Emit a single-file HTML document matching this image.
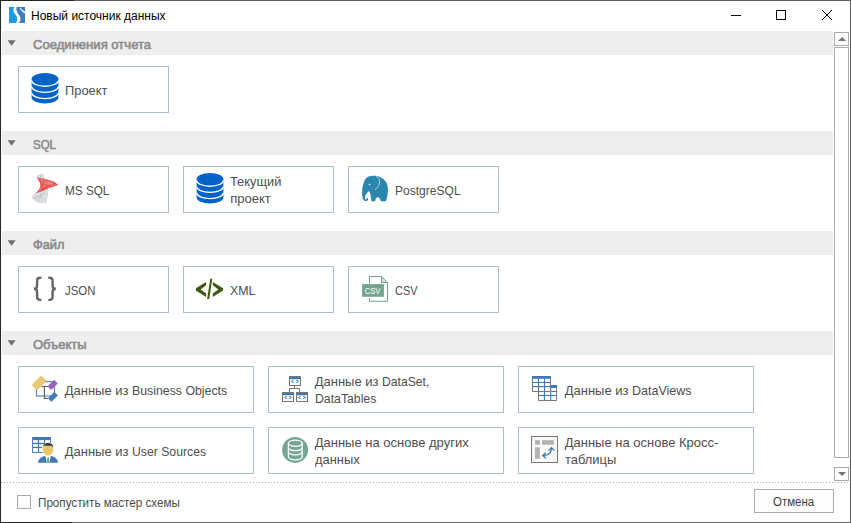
<!DOCTYPE html>
<html lang="ru">
<head>
<meta charset="utf-8">
<title>Новый источник данных</title>
<style>
html,body{margin:0;padding:0;background:#fff;}
body{width:851px;height:523px;overflow:hidden;font-family:"Liberation Sans",sans-serif;}
.win{position:relative;width:851px;height:523px;background:#fff;overflow:hidden;}
.bd{position:absolute;pointer-events:none;}
.bd.l{left:0;top:0;width:1px;height:523px;background:#262624;}
.bd.r{left:850px;top:0;width:1px;height:523px;background:#5a5a5a;}
.bd.t{left:0;top:0;width:851px;height:1px;background:linear-gradient(to right,#262624 0,#262624 74px,#5e5e5e 74px,#5e5e5e 100%);}
.bd.b{left:0;top:522px;width:851px;height:1px;background:linear-gradient(to right,#262624 0,#262624 72px,#626262 72px,#626262 100%);}
.titlebar{position:absolute;left:0;top:0;width:851px;height:31px;background:#fff;}
.logo{position:absolute;left:9px;top:7px;}
.winctl{position:absolute;left:725px;top:1px;}
.tx{position:absolute;white-space:pre;line-height:17px;transform-origin:0 0;display:block;}
.sc{display:inline-block;transform-origin:0 0;white-space:pre;}
.tx.title{font-size:12px;color:#000;}
.tx.h{font-size:12px;font-weight:400;color:#8a8a8a;-webkit-text-stroke:0.55px #8a8a8a;}
.tx.l{font-size:13px;color:#4e4e4e;}
.tx.f{font-size:12px;color:#4c4c4c;}
.tx.b{font-size:12px;color:#3c3c3c;}
.content{position:absolute;left:0;top:0;width:851px;height:482px;}
.hdr{position:absolute;left:2px;width:831px;height:24px;background:#eeeeee;}
.arr{position:absolute;left:5.6px;top:9.2px;width:8px;height:5.5px;background:#707070;clip-path:polygon(0 0,100% 0,50% 100%);}
.tile{position:absolute;height:45px;border:1px solid #aebccf;background:#fff;}
.ic{position:absolute;left:-1px;top:-1px;}
.scroll{position:absolute;left:833px;top:31px;}
.footer{position:absolute;left:0;top:483px;width:851px;height:40px;}
.footer::before{content:"";position:absolute;left:1px;top:-1px;width:848px;height:1px;background:repeating-linear-gradient(to right,#adadad 0,#adadad 1px,transparent 1px,transparent 3px);}
.cb{position:absolute;left:17px;top:12px;width:12px;height:12px;border:1px solid #a8a8a8;background:#fdfdfd;}
.btn{position:absolute;left:754px;top:6px;width:78px;height:22px;border:1px solid #adadad;background:#fdfdfd;}
</style>
</head>
<body>
<div class="win">
<div class="titlebar">
<svg class="logo" width="16" height="16" viewBox="9 7 16 16"><path fill="#1b9ce2" d="M9,7 H14.4 C13,9 12.9,11 14.5,13.2 C16.5,15.8 18.8,18.6 16,23 H9 Z"/><path fill="#3f7cbf" d="M16.7,7 H25 V23 H18.9 C21.2,19.8 21,17.8 19,15 C17,12.3 15.6,10 16.7,7 Z"/><path fill="#ffffff" d="M19.7,8 L20.3,7.8 C21.8,9.5 23.3,10.8 25,11.8 L25,13.6 C22.8,12.3 21,10.3 19.7,8 Z"/></svg>
<span class="tx title" style="left:31.0px;top:7.5px;">Новый источник данных</span>
<svg class="winctl" width="120" height="30" viewBox="725 1 120 30"><path d="M731,15.5 H741" stroke="#000" stroke-width="1" fill="none"/><rect x="776.5" y="10.5" width="9" height="9" stroke="#000" stroke-width="1" fill="none"/><path d="M822,10 L832,20 M832,10 L822,20" stroke="#000" stroke-width="1" fill="none"/></svg>
</div>
<div class="content">
<div class="hdr" style="top:31px"><i class="arr"></i><span class="tx h" style="left:31.2px;top:5.5px;transform:scaleX(1.0896);">Соединения отчета</span></div>
<div class="hdr" style="top:131px"><i class="arr"></i><span class="tx h" style="left:31.2px;top:5.5px;transform:scaleX(0.9577);">SQL</span></div>
<div class="hdr" style="top:231px"><i class="arr"></i><span class="tx h" style="left:31.2px;top:5.5px;transform:scaleX(1.0672);">Файл</span></div>
<div class="hdr" style="top:331px"><i class="arr"></i><span class="tx h" style="left:31.2px;top:5.5px;transform:scaleX(1.0828);">Объекты</span></div>
<div class="tile" style="left:18px;top:66px;width:149px"><svg class="ic" width="47" height="47" viewBox="0 0 47 47"><path fill="#0563c7" d="M13.6,13 a13.4,6 0 0 1 26.8,0 v18.5 a13.4,6 0 0 1 -26.8,0 z"/><g fill="none" stroke="#fff" stroke-width="1.35"><path d="M13.6,14.4 a13.4,5.8 0 0 0 26.8,0"/><path d="M13.6,20.6 a13.4,5.8 0 0 0 26.8,0"/><path d="M13.6,26.8 a13.4,5.8 0 0 0 26.8,0"/></g></svg><span class="tx l" style="left:46.4px;top:15.0px;transform:scaleX(0.9900);">Проект</span></div>
<div class="tile" style="left:18px;top:166px;width:149px"><svg class="ic" width="47" height="47" viewBox="0 0 47 47"><path fill="#dfe3e6" stroke="#bcc3c9" stroke-width="0.5" d="M19,10 L24.7,8 L26.2,13 L22.5,14 Z"/><path fill="#dfe3e6" stroke="#bcc3c9" stroke-width="0.5" d="M17.4,27.3 C15,29 14,30.5 14.3,31.5 C15,34 19,36 22.5,36.6 L27.9,36.6 C29,33 30,28 29.6,22.6 Z"/><path fill="none" stroke="#aeb6bd" stroke-width="0.45" d="M18,29 L28,33 M16,32 L29,28 M22,26 L24,36 M26,25 L20,35 M15,31 L22,36 M28,25 L17,33 M20.5,9.5 L25.5,12 M23,8.8 L22,13.5"/><path fill="#e2413a" fill-opacity="0.92" d="M18.2,11.2 C24,12.4 31,13.5 35.5,15.6 C38,16.8 39.5,18.2 39.9,19.3 C36,20.2 32,21.6 29.5,22.8 C25,25 21,26.5 17.2,27.5 C20,25 22,22.5 22.3,20 C22.6,16.5 20.5,13.5 18.2,11.2 Z"/><path fill="none" stroke="#ffffff" stroke-opacity="0.38" stroke-width="0.5" d="M22,14 L33,19 M24,17 L36,17 M23,22 L34,16 M27,13.5 L27,23 M31,14.5 L30,22 M20,12 L38,19 M21,25 L30,15 M34,15.5 L33,21 M24,13 L22,25 M29,14 L36,20"/></svg><span class="tx l" style="left:46.4px;top:15.0px;transform:scaleX(0.9038);">MS SQL</span></div>
<div class="tile" style="left:183px;top:166px;width:149px"><svg class="ic" width="47" height="47" viewBox="0 0 47 47"><path fill="#0563c7" d="M13.6,13 a13.4,6 0 0 1 26.8,0 v18.5 a13.4,6 0 0 1 -26.8,0 z"/><g fill="none" stroke="#fff" stroke-width="1.35"><path d="M13.6,14.4 a13.4,5.8 0 0 0 26.8,0"/><path d="M13.6,20.6 a13.4,5.8 0 0 0 26.8,0"/><path d="M13.6,26.8 a13.4,5.8 0 0 0 26.8,0"/></g></svg><span class="tx l" style="left:46.3px;top:6.0px;transform:scaleX(0.9865);">Текущий</span><span class="tx l" style="left:46.3px;top:23.0px;">проект</span></div>
<div class="tile" style="left:348px;top:166px;width:149px"><svg class="ic" width="47" height="47" viewBox="0 0 47 47"><path fill="#2b86ad" d="M23.5,9.9 C20.5,10 18.3,11.3 17,13.8 C15.3,17 14.3,21 14.1,25.3 C14,28 14.1,30.5 14.7,32.2 C15.3,34 16.4,35.1 17.8,35.1 C19.3,35.1 20.2,34 20,32.7 C19.8,31.7 19,31.4 18.4,31.8 C19,32.3 18.9,33.3 18,33.5 C17,33.6 16.7,32.4 17,31 C17.5,28.7 19,26.3 21.1,24.9 C21.8,26 22.3,27.5 22.6,29.5 L23.5,35.3 L27.1,35.3 C27.3,33.3 28.3,31.3 29.9,31.3 C31.5,31.3 32.5,33.3 32.7,35.3 L37.9,35.3 C39.2,32 40,27.5 39.9,23 C39.8,19.5 39,17 37.5,15.2 C35,12 31,10 27.1,9.7 C25.8,9.6 24.6,9.7 23.5,9.9 Z"/><path fill="none" stroke="#fff" stroke-opacity="0.85" stroke-width="0.7" d="M28,10.3 C30.5,11.5 31.8,13.5 31.6,16 C31.4,19 29.5,22 27,23.8"/><circle cx="21.5" cy="18.5" r="0.75" fill="#fff"/></svg><span class="tx l" style="left:46.4px;top:15.0px;transform:scaleX(0.9262);">PostgreSQL</span></div>
<div class="tile" style="left:18px;top:266px;width:149px"><svg class="ic" width="47" height="47" viewBox="0 0 47 47"><g fill="none" stroke="#666" stroke-width="2.4"><path d="M23.4,11.8 h-1.2 q-3.1,0 -3.1,3 v4.6 q0,3.4 -3.2,3.4 q3.2,0 3.2,3.4 v4.6 q0,3.1 3.1,3.1 h1.2"/><path d="M30.3,11.8 h1.2 q3.1,0 3.1,3 v4.6 q0,3.4 3.2,3.4 q-3.2,0 -3.2,3.4 v4.6 q0,3.1 -3.1,3.1 h-1.2"/></g></svg><span class="tx l" style="left:46.0px;top:15.0px;transform:scaleX(0.8768);">JSON</span></div>
<div class="tile" style="left:183px;top:266px;width:149px"><svg class="ic" width="47" height="47" viewBox="0 0 47 47"><g fill="#3b5b0b"><path d="M23.1,16 L12.9,22.3 L12.9,24.5 L23.1,30.9 L23.1,27.6 L17.6,23.4 L23.1,19.3 Z"/><path d="M27.3,12.8 L29.3,12.8 L26.2,32.9 L24.1,32.9 Z"/><path d="M29.8,16 L40,22.3 L40,24.5 L29.8,30.9 L29.8,27.6 L35.3,23.4 L29.8,19.3 Z"/></g></svg><span class="tx l" style="left:46.0px;top:15.0px;transform:scaleX(0.9501);">XML</span></div>
<div class="tile" style="left:348px;top:266px;width:149px"><svg class="ic" width="47" height="47" viewBox="0 0 47 47"><path fill="none" stroke="#74a48f" stroke-width="1" d="M21.5,17.5 V10.5 H33.5 L39.5,16.5 V35.3 H21.5 V32"/><path fill="#d5e5de" stroke="#74a48f" stroke-width="1" d="M33.5,10.5 V16.5 H39.5 Z"/><rect x="14.1" y="18.1" width="21.8" height="12.7" fill="#74a48f"/><text x="16.8" y="28.1" font-family="Liberation Sans, sans-serif" font-size="9.8" fill="#fff" textLength="15.6" lengthAdjust="spacingAndGlyphs">CSV</text></svg><span class="tx l" style="left:46.4px;top:15.0px;transform:scaleX(0.8416);">CSV</span></div>
<div class="tile" style="left:18px;top:366px;width:234px"><svg class="ic" width="47" height="47" viewBox="0 0 47 47"><rect x="18.5" y="15.7" width="18" height="14.3" fill="none" stroke="#4a86c5" stroke-width="1.15"/><path fill="none" stroke="#555" stroke-width="1.1" d="M23.5,20.5 H29.9 M26.4,20.5 V32.5 H29.9"/><rect x="-6.8" y="-3.8" width="13.6" height="7.6" rx="1.3" fill="#ebc778" transform="translate(21.05,16.9) rotate(-45)"/><rect x="-4.6" y="-2.6" width="9.2" height="5.2" rx="0.8" fill="#9a5fc0" transform="translate(34.7,18.9) rotate(-45)"/><rect x="-4.6" y="-2.5" width="9.2" height="5" rx="0.8" fill="#3f7cbf" transform="translate(34.9,30.9) rotate(-45)"/></svg><span class="tx l" style="left:45.7px;top:15.0px;">Данные из <span class="sc" style="transform:scaleX(0.9476);">Business Objects</span></span></div>
<div class="tile" style="left:268px;top:366px;width:234px"><svg class="ic" width="47" height="47" viewBox="0 0 47 47"><path fill="none" stroke="#777" stroke-width="1" d="M26.5,19.5 V22.5 M21.5,26.5 V22.5 H31.5 V26.5"/><rect x="21.5" y="10.5" width="11" height="9" fill="#fff" stroke="#777"/><rect x="22" y="11" width="10" height="2.2" fill="#3d78b8"/><path fill="none" stroke="#3d78b8" stroke-width="1" d="M25.8,14 l-2.4,1.4 l2.4,1.4 M28.2,14 l2.4,1.4 l-2.4,1.4"/><rect x="14.5" y="26.5" width="11" height="9" fill="#fff" stroke="#777"/><rect x="15" y="27" width="10" height="2.2" fill="#3d78b8"/><path fill="none" stroke="#3d78b8" stroke-width="1" d="M18.8,30 l-2.4,1.4 l2.4,1.4 M21.2,30 l2.4,1.4 l-2.4,1.4"/><rect x="28.5" y="26.5" width="11" height="9" fill="#fff" stroke="#777"/><rect x="29" y="27" width="10" height="2.2" fill="#3d78b8"/><path fill="none" stroke="#3d78b8" stroke-width="1" d="M32.8,30 l-2.4,1.4 l2.4,1.4 M35.2,30 l2.4,1.4 l-2.4,1.4"/></svg><span class="tx l" style="left:45.7px;top:6.0px;">Данные из <span class="sc" style="transform:scaleX(0.9345);">DataSet,</span></span><span class="tx l" style="left:46.2px;top:23.0px;transform:scaleX(0.9424);">DataTables</span></div>
<div class="tile" style="left:518px;top:366px;width:234px"><svg class="ic" width="47" height="47" viewBox="0 0 47 47"><rect x="20" y="19" width="19.1" height="16" fill="#fff"/><rect x="20" y="19" width="19.1" height="3" fill="#3d78b8"/><path d="M26.4,22 V35" stroke="#3d78b8" stroke-width="1.1"/><path d="M32.7,22 V35" stroke="#3d78b8" stroke-width="1.1"/><path d="M20,25.5 H39.1" stroke="#3d78b8" stroke-width="1.1"/><path d="M20,29.5 H39.1" stroke="#3d78b8" stroke-width="1.1"/><path fill="none" stroke="#777" stroke-width="1" d="M20.5,22 V34.5 H38.6 V22"/><rect x="14" y="10" width="19" height="16" fill="#fff"/><rect x="14" y="10" width="19" height="2.8" fill="#3d78b8"/><path d="M20.5,12.8 V26" stroke="#3d78b8" stroke-width="1.1"/><path d="M26.5,12.8 V26" stroke="#3d78b8" stroke-width="1.1"/><path d="M14,16.5 H33" stroke="#3d78b8" stroke-width="1.1"/><path d="M14,20.6 H33" stroke="#3d78b8" stroke-width="1.1"/><path fill="none" stroke="#777" stroke-width="1" d="M14.5,12.8 V25.5 H32.5 V12.8"/></svg><span class="tx l" style="left:45.7px;top:15.0px;">Данные из <span class="sc" style="transform:scaleX(0.9608);">DataViews</span></span></div>
<div class="tile" style="left:18px;top:427px;width:234px"><svg class="ic" width="47" height="47" viewBox="0 0 47 47"><rect x="14.1" y="10" width="18.8" height="15.9" fill="#3d78b8"/><g fill="#fff"><rect x="15" y="13.1" width="4.9" height="2.7"/><rect x="21.1" y="13.1" width="4.9" height="2.7"/><rect x="27.1" y="13.1" width="4.9" height="2.7"/><rect x="15" y="17.1" width="4.9" height="2.7"/><rect x="21.1" y="17.1" width="4.9" height="2.7"/><rect x="27.1" y="17.1" width="4.9" height="2.7"/><rect x="15" y="21.1" width="4.9" height="3.8"/><rect x="21.1" y="21.1" width="4.9" height="3.8"/><rect x="27.1" y="21.1" width="4.9" height="3.8"/></g><ellipse cx="30.1" cy="22.3" rx="6.1" ry="7" fill="#fff"/><path fill="#fff" d="M19,36.5 C19,31 24,28.5 30.1,28.5 C36.2,28.5 41,31 41,36.5 Z"/><ellipse cx="30.1" cy="22.3" rx="5.3" ry="6.2" fill="#efc465"/><path fill="#3b3b3b" d="M24.9,20.5 C24.8,17.5 27,16 30.1,16 C33.3,16 35.4,17.5 35.3,20.5 C34.5,19 33,18.6 31,18.8 C29,19 27,18.5 26.3,18.4 C25.5,18.8 25,19.5 24.9,20.5 Z"/><path fill="#3d78b8" d="M20,35.7 C20.3,32 23.5,29.8 27.2,29 L30.1,33.5 L33,29 C36.7,29.8 39.8,32 40.1,35.7 Z"/><path fill="#fff" d="M27.4,28.8 L30.1,30.5 L32.8,28.8 L31.3,35.7 L28.9,35.7 Z"/><path fill="#4a9a6a" d="M29.4,30.4 L30.8,30.4 L31,35.7 L29.2,35.7 Z"/></svg><span class="tx l" style="left:45.7px;top:15.0px;">Данные из <span class="sc" style="transform:scaleX(0.9407);">User Sources</span></span></div>
<div class="tile" style="left:268px;top:427px;width:234px"><svg class="ic" width="47" height="47" viewBox="0 0 47 47"><circle cx="27.1" cy="22.9" r="13" fill="#74a595"/><g fill="none" stroke="#fff" stroke-width="1.3"><ellipse cx="27.3" cy="16.3" rx="6.9" ry="3.1"/><path d="M20.4,16.3 V29.8 a6.9,3.1 0 0 0 13.8,0 V16.3"/><path d="M20.4,20.6 a6.9,3.1 0 0 0 13.8,0"/><path d="M20.4,24.7 a6.9,3.1 0 0 0 13.8,0"/></g></svg><span class="tx l" style="left:45.7px;top:6.0px;">Данные на основе других</span><span class="tx l" style="left:45.7px;top:23.0px;transform:scaleX(0.9926);">данных</span></div>
<div class="tile" style="left:518px;top:427px;width:234px"><svg class="ic" width="47" height="47" viewBox="0 0 47 47"><rect x="13.5" y="9.5" width="26" height="26" fill="#f9f9f9" stroke="#777" stroke-width="1"/><g fill="#b3b3b3"><rect x="17" y="13.2" width="4.9" height="4.5"/><rect x="24" y="13.2" width="11.9" height="4.5"/><rect x="17" y="20.3" width="4.9" height="11.4"/></g><g fill="none" stroke="#3d78b8" stroke-width="1.3"><path d="M25.2,28.5 C30.5,28.6 33.3,26 33.5,21"/><path d="M27.8,25.7 L24.8,28.5 L27.9,31.2"/><path d="M30.6,23.6 L33.5,20.6 L36.4,23.6"/></g></svg><span class="tx l" style="left:45.7px;top:6.0px;">Данные на основе Кросс-</span><span class="tx l" style="left:45.7px;top:23.0px;transform:scaleX(0.9933);">таблицы</span></div>
<svg class="scroll" width="17" height="451" viewBox="833 31 17 451"><rect x="834.5" y="32.5" width="14" height="13" fill="#fff" stroke="#ababab"/><path d="M838,41 L846.2,41 L842.1,36.9 Z" fill="#777"/><rect x="834.5" y="47.5" width="14" height="410" fill="#fff" stroke="#ababab"/><rect x="834.5" y="467.5" width="14" height="13" fill="#fff" stroke="#ababab"/><path d="M838,472 L846.2,472 L842.1,476.1 Z" fill="#777"/></svg>
</div>
<div class="footer">
<i class="cb"></i>
<span class="tx f" style="left:37.6px;top:12.0px;transform:scaleX(0.9719);">Пропустить мастер схемы</span>
<div class="btn"><span class="tx b" style="left:18.2px;top:4.0px;transform:scaleX(0.9544);">Отмена</span></div>
</div>
<i class="bd t"></i><i class="bd b"></i><i class="bd l"></i><i class="bd r"></i>
</div>
</body>
</html>
